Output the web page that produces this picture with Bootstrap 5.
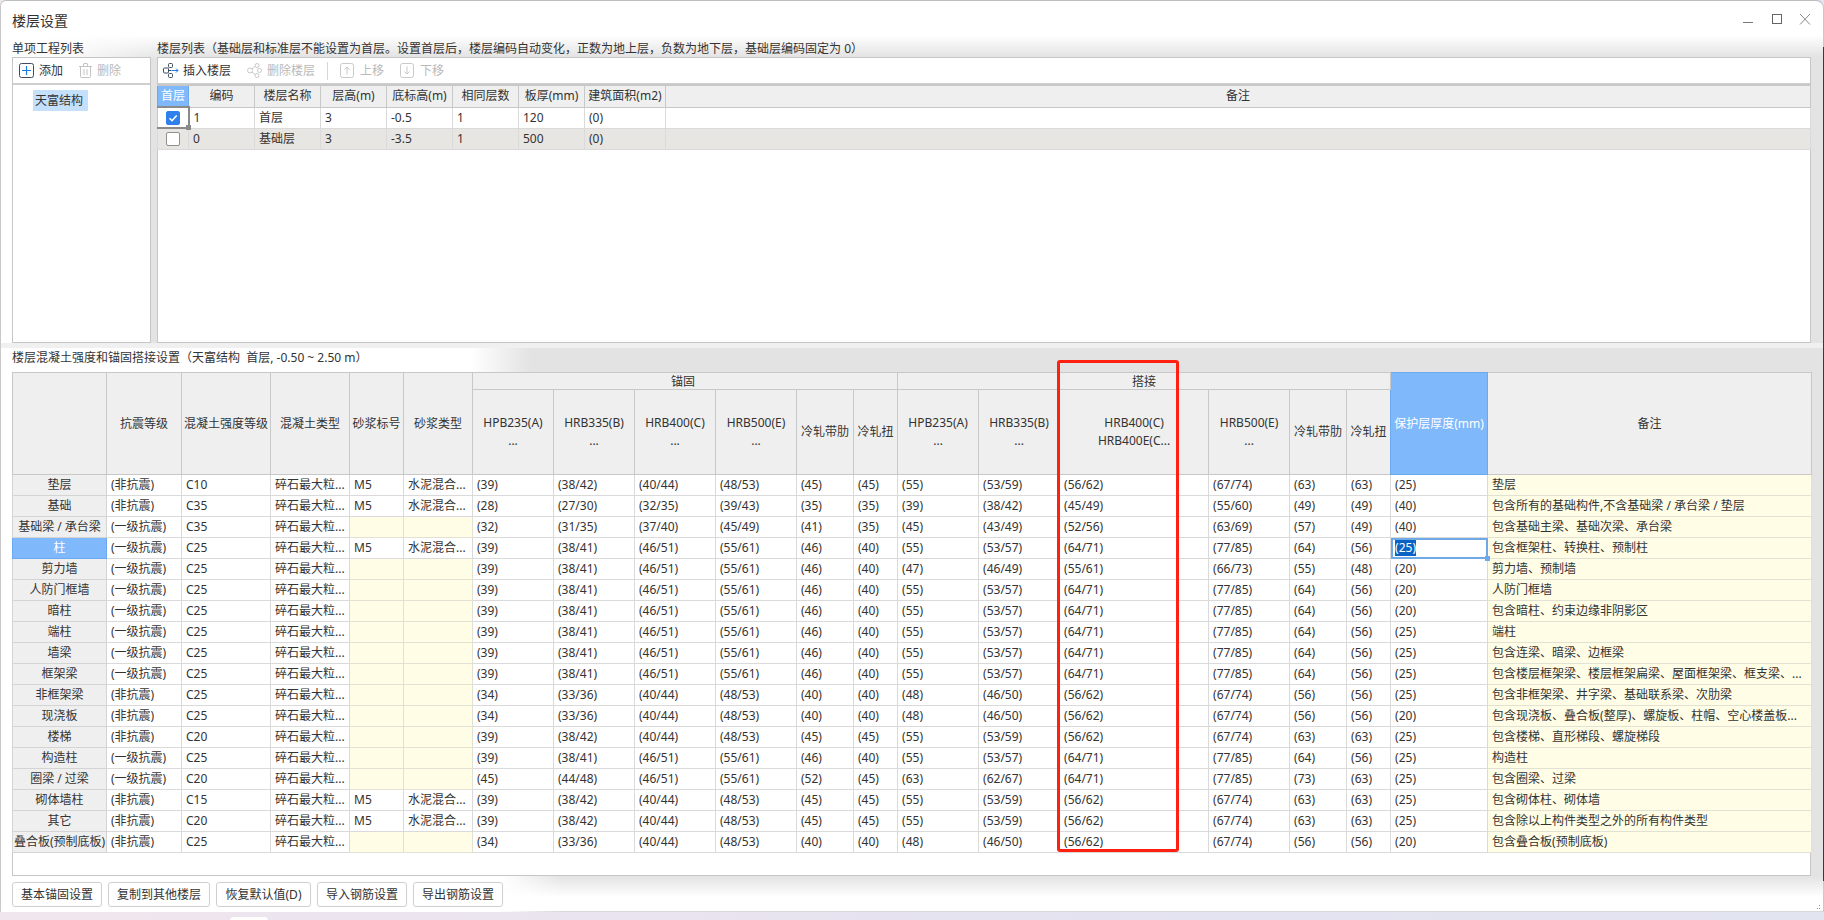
<!DOCTYPE html>
<html lang="zh-CN">
<head>
<meta charset="utf-8">
<title>楼层设置</title>
<link href="https://cdn.jsdelivr.net/npm/bootstrap@5.3.0/dist/css/bootstrap.min.css" rel="stylesheet">
<style>
html,body{height:920px;overflow:hidden;margin:0}
body{background:linear-gradient(90deg,#f0e6ee,#e4e2f0 60%,#e2e4f0);font:12px/1.5 "Noto Sans","Noto Sans CJK SC",sans-serif;color:#333}
.win{width:1824px;height:912px;position:relative;border-top:1px solid #bdbdbd;border-right:1px solid #c9c9c9;border-left:1px solid #c9c9c9;border-bottom:1px solid #d8d8d8;border-top-left-radius:6px;border-top-right-radius:8px;background:
 linear-gradient(90deg,#fff 0,#fff 11px,rgba(255,255,255,0) 11px) 0 0/100% 100% no-repeat,
 linear-gradient(90deg,#fff 0,rgba(255,255,255,.85) 60px,rgba(255,255,255,0) 170px) 0 0/100% 57px no-repeat,
 linear-gradient(180deg,#fff 0,#fff 34px,#e3e3e3 56px,#e3e3e3 875px,#fff 896px,#fff 912px)}
.ttl{height:39px;padding-left:11px;font-size:14px;color:#333}
.wbtn{width:28.5px;height:14px;color:#777}
.wbtn:last-child{width:12px}
.wbtn svg{display:block}
.ctrls{padding-right:12px}
.toprow{height:303px;padding-left:11px;padding-right:12px;column-gap:6px}
.lcol{width:140px}
.rcol{width:1654px}
.lbl{height:17px;line-height:17px;color:#333;white-space:pre}
.panel{background:#fff;border:1px solid #c6c6c6;height:286px}
.tools{height:27px;padding-left:5px;border-bottom:2px solid #cfcfcf}
.lcol .tools{padding-left:6px}
.tool{column-gap:5px;color:#333;white-space:nowrap}
.tool.tight{column-gap:4px}
.tool.wide{column-gap:6px}
.tool.off{color:#b9b9b9}
.tool svg{display:block;flex:none}
.tree{padding:5px 0 0 20px}
.pick{display:inline-block;background:#c5e0fb;padding:0 2px;height:21px;line-height:21px;width:55px;color:#333}
.sep{width:1px;height:18px;background:#d6d6d6;margin:0 12px}
.lbl2{height:29px;line-height:29px;padding-left:11px;color:#333;white-space:pre;background:linear-gradient(180deg,#f0f0f0 0,#f0f0f0 5px,rgba(240,240,240,0) 5px),linear-gradient(90deg,#fff 470px,rgba(255,255,255,0) 530px)}
.gridbox{margin-left:11px;width:1799px;height:504px;background:#fff;border:1px solid #c6c6c6;position:relative}
table.sheet{table-layout:fixed;border-collapse:collapse;margin:-1px 0 0 -1px;color:#333;font-size:12px;line-height:20px}
table.sheet>:not(caption)>*>*{padding:0 4px;height:21px;border:1px solid #dadada;background:#fff;box-shadow:none;color:#333;white-space:nowrap;overflow:hidden;vertical-align:middle}
table.sheet>thead>tr>th{background:#efefef;border-color:#c8c8c8;font-weight:400;text-align:center;padding:0 1px}
table.sheet>tbody>tr>th{background:#efefef;border-color:#d4d4d4;font-weight:400;text-align:center;padding:0}
table.sheet>thead>tr>th.hot,table.sheet>tbody>tr>th.hot{background:#7fb8fb;color:#fff;border-color:#6aa9ee}
table.sheet>thead>tr>th.anchor{padding-right:5px}
table.sheet>tbody>tr>td.soft{background:#fffde6;border-color:#e2e2d4}
table.sheet>thead>tr>th.two{line-height:18px}
table.sheet>tbody>tr>td.grey{background:#e7e6e3}
#upper{width:1653px}
#upper col:nth-child(1){width:31px}
#upper col:nth-child(2),#upper col:nth-child(3),#upper col:nth-child(4),#upper col:nth-child(5),#upper col:nth-child(6),#upper col:nth-child(7){width:66px}
#upper col:nth-child(8){width:81px}
#upper col:nth-child(9){width:1145px}
#upper>thead>tr>th{height:21px;border-top:2px solid #c8c8c8}
#lower{width:1799px}
#lower col:nth-child(1){width:94px}
#lower col:nth-child(2){width:75px}
#lower col:nth-child(3){width:89px}
#lower col:nth-child(4){width:79px}
#lower col:nth-child(5){width:54px}
#lower col:nth-child(6){width:69px}
#lower col:nth-child(7),#lower col:nth-child(8),#lower col:nth-child(9),#lower col:nth-child(10),#lower col:nth-child(13),#lower col:nth-child(14),#lower col:nth-child(16){width:81px}
#lower col:nth-child(11),#lower col:nth-child(17){width:57px}
#lower col:nth-child(12),#lower col:nth-child(18){width:44px}
#lower col:nth-child(15){width:149px}
#lower col:nth-child(19){width:97px}
#lower col:nth-child(20){width:324px}
#lower>thead>tr:first-child>th{height:17px;line-height:15px}
#lower>thead>tr:last-child>th{height:85px}
.boldw{font-weight:700}
.chk{display:block;width:14px;height:14px;border-radius:2px;border:1px solid #8f8f8f;background:#fff;margin:0 auto}
.chk.on{background:#2f80ed;border-color:#2f80ed}
.chk svg{display:block}
table.sheet>tbody>tr>td.cur{position:relative;overflow:visible;border:2px solid #8a8a8a;border-left:0;padding:0}
table.sheet>tbody>tr>td.edit{position:relative;overflow:visible;outline:2px solid #6fa9e8;outline-offset:-2px;padding-left:4px}
.sel{background:#0a63c4;color:#fff}
.knob{position:absolute;right:-3px;bottom:-3px;width:5px;height:5px}
.knob.a{background:#8a8a8a}
.knob.b{background:#6fa9e8}
.footbar{height:36px;padding:6px 0 0 11px;column-gap:6px;background:linear-gradient(90deg,#fff 500px,rgba(255,255,255,0) 560px)}
.gbtn{height:25px;padding:0;background:#fff;border:1px solid #cfcfcf;border-radius:3px;color:#333;font-size:12px;line-height:1;--bs-btn-hover-bg:#fff}
.w90{width:90px}.w102{width:102px}.w95{width:95px}
.redbox{position:absolute;left:1056px;top:359px;width:122px;height:492px;border:3px solid #ff2012;border-radius:3px;pointer-events:none}
.edge{position:absolute;right:-1px;top:46px;width:1px;height:834px;background:#3a3a3a}
.grip{position:absolute;right:2px;bottom:1px;display:block}
.taskbit{position:absolute;left:230px;top:917px;width:38px;height:10px;background:#fff;border-radius:4px 4px 0 0}
</style>
</head>
<body>
<div class="win">
  <div class="ttl d-flex align-items-center justify-content-between">
    <span>楼层设置</span>
    <div class="ctrls d-flex align-items-center">
      <span class="wbtn"><svg width="12" height="14" viewBox="0 0 12 14"><path d="M1 8.500h10" stroke="#777" stroke-width="1"/></svg></span>
      <span class="wbtn"><svg width="12" height="14" viewBox="0 0 12 14"><rect x="1.500" y="0.500" width="9" height="9" fill="none" stroke="#666" stroke-width="1"/></svg></span>
      <span class="wbtn"><svg width="12" height="14" viewBox="0 0 12 14"><path d="M1 0l10 10.500M11 0L1 10.500" stroke="#888" stroke-width="1" fill="none"/></svg></span>
    </div>
  </div>
  <div class="toprow d-flex">
    <div class="lcol">
      <div class="lbl">单项工程列表</div>
      <div class="panel">
        <div class="tools d-flex align-items-center gap-3">
          <span class="tool d-flex align-items-center">
            <svg width="15" height="15" viewBox="0 0 15 15"><rect x=".5" y=".5" width="14" height="14" rx="2" fill="none" stroke="#3d4a60"/><path d="M7.500 3v9M3 7.500h9" stroke="#1f7ae0" stroke-width="1.200"/></svg>添加</span>
          <span class="tool off d-flex align-items-center">
            <svg width="13" height="15" viewBox="0 0 13 15"><path d="M1.500 3.500v10a1 1 0 0 0 1 1h8a1 1 0 0 0 1-1v-10M0 3.500h13M4.500 3.500V1a.5.5 0 0 1 .5-.5h3a.5.5 0 0 1 .5.5v2.500M5 6v6M8 6v6" fill="none" stroke="#c4c4c4"/></svg>删除</span>
        </div>
        <div class="tree"><span class="pick">天富结构</span></div>
      </div>
    </div>
    <div class="rcol">
      <div class="lbl">楼层列表（基础层和标准层不能设置为首层。设置首层后，楼层编码自动变化，正数为地上层，负数为地下层，基础层编码固定为 0）</div>
      <div class="panel">
        <div class="tools d-flex align-items-center">
          <span class="tool tight d-flex align-items-center">
            <svg width="16" height="15" viewBox="0 0 16 15"><g fill="none" stroke="#3d4a60"><rect x=".5" y="5" width="5" height="5" rx="1"/><rect x="5.500" y=".5" width="4" height="4" rx="1"/><rect x="5.500" y="10.500" width="4" height="4" rx="1"/></g><path d="M5.500 7.500h3" stroke="#3d4a60"/><path d="M9 7.500h6M13 5.500l2 2-2 2" fill="none" stroke="#1f7ae0"/></svg>插入楼层</span>
          <span class="tool off d-flex align-items-center ms-3">
            <svg width="15" height="15" viewBox="0 0 15 15"><g fill="none" stroke="#c9c9c9"><circle cx="3" cy="7.500" r="2.500"/><circle cx="10" cy="2.500" r="2"/><circle cx="10" cy="12.500" r="2"/><circle cx="12.500" cy="7.500" r="2"/><path d="M5 6l3-2.500M5 9l3 2.500"/></g></svg>删除楼层</span>
          <span class="sep"></span>
          <span class="tool wide off d-flex align-items-center">
            <svg width="14" height="15" viewBox="0 0 14 15"><rect x=".5" y=".5" width="13" height="14" rx="2" fill="none" stroke="#c9c9c9"/><path d="M7 11.500V4M4.500 6.500 7 4l2.500 2.500" fill="none" stroke="#c9c9c9"/></svg>上移</span>
          <span class="tool wide off d-flex align-items-center ms-3">
            <svg width="14" height="15" viewBox="0 0 14 15"><rect x=".5" y=".5" width="13" height="14" rx="2" fill="none" stroke="#c9c9c9"/><path d="M7 3.500V11M4.500 8.500 7 11l2.500-2.500" fill="none" stroke="#c9c9c9"/></svg>下移</span>
        </div>
        <table id="upper" class="table table-bordered sheet mb-0">
          <colgroup><col><col><col><col><col><col><col><col><col></colgroup>
          <thead><tr><th class="hot">首层</th><th>编码</th><th>楼层名称</th><th>层高(m)</th><th>底标高(m)</th><th>相同层数</th><th>板厚(mm)</th><th>建筑面积(m2)</th><th>备注</th></tr></thead>
          <tbody>
            <tr><td class="cur"><span class="chk on"><svg width="12" height="12" viewBox="0 0 12 12"><path d="M2.500 6.200 5 8.700l4.700-5.200" fill="none" stroke="#fff" stroke-width="1.600"/></svg></span><i class="knob a"></i></td><td>1</td><td>首层</td><td>3</td><td>-0.5</td><td>1</td><td>120</td><td>(0)</td><td></td></tr>
            <tr><td class="grey"><span class="chk"></span></td><td class="grey">0</td><td class="grey">基础层</td><td class="grey">3</td><td class="grey">-3.5</td><td class="grey">1</td><td class="grey">500</td><td class="grey">(0)</td><td class="grey"></td></tr>
          </tbody>
        </table>
      </div>
    </div>
  </div>
  <div class="lbl2">楼层混凝土强度和锚固搭接设置（天富结构  首层, -0.50 ~ 2.50 m）</div>
  <div class="gridbox">
    <table id="lower" class="table table-bordered sheet mb-0">
      <colgroup><col><col><col><col><col><col><col><col><col><col><col><col><col><col><col><col><col><col><col><col></colgroup>
      <thead>
        <tr><th rowspan="2"></th><th rowspan="2">抗震等级</th><th rowspan="2">混凝土强度等级</th><th rowspan="2">混凝土类型</th><th rowspan="2">砂浆标号</th><th rowspan="2">砂浆类型</th><th colspan="6" class="anchor">锚固</th><th colspan="6">搭接</th><th rowspan="2" class="hot boldw">保护层厚度(mm)</th><th rowspan="2">备注</th></tr>
        <tr><th class="two">HPB235(A)<br>...</th><th class="two">HRB335(B)<br>...</th><th class="two">HRB400(C)<br>...</th><th class="two">HRB500(E)<br>...</th><th>冷轧带肋</th><th>冷轧扭</th><th class="two">HPB235(A)<br>...</th><th class="two">HRB335(B)<br>...</th><th class="two">HRB400(C)<br>HRB400E(C...</th><th class="two">HRB500(E)<br>...</th><th>冷轧带肋</th><th>冷轧扭</th></tr>
      </thead>
      <tbody>
        <tr><th>垫层</th><td>(非抗震)</td><td>C10</td><td>碎石最大粒...</td><td>M5</td><td>水泥混合...</td><td>(39)</td><td>(38/42)</td><td>(40/44)</td><td>(48/53)</td><td>(45)</td><td>(45)</td><td>(55)</td><td>(53/59)</td><td>(56/62)</td><td>(67/74)</td><td>(63)</td><td>(63)</td><td>(25)</td><td class="soft">垫层</td></tr>
        <tr><th>基础</th><td>(非抗震)</td><td>C35</td><td>碎石最大粒...</td><td>M5</td><td>水泥混合...</td><td>(28)</td><td>(27/30)</td><td>(32/35)</td><td>(39/43)</td><td>(35)</td><td>(35)</td><td>(39)</td><td>(38/42)</td><td>(45/49)</td><td>(55/60)</td><td>(49)</td><td>(49)</td><td>(40)</td><td class="soft">包含所有的基础构件,不含基础梁 / 承台梁 / 垫层</td></tr>
        <tr><th>基础梁 / 承台梁</th><td>(一级抗震)</td><td>C35</td><td>碎石最大粒...</td><td class="soft"></td><td class="soft"></td><td>(32)</td><td>(31/35)</td><td>(37/40)</td><td>(45/49)</td><td>(41)</td><td>(35)</td><td>(45)</td><td>(43/49)</td><td>(52/56)</td><td>(63/69)</td><td>(57)</td><td>(49)</td><td>(40)</td><td class="soft">包含基础主梁、基础次梁、承台梁</td></tr>
        <tr><th class="hot boldw">柱</th><td>(一级抗震)</td><td>C25</td><td>碎石最大粒...</td><td>M5</td><td>水泥混合...</td><td>(39)</td><td>(38/41)</td><td>(46/51)</td><td>(55/61)</td><td>(46)</td><td>(40)</td><td>(55)</td><td>(53/57)</td><td>(64/71)</td><td>(77/85)</td><td>(64)</td><td>(56)</td><td class="edit"><span class="sel">(25)</span><i class="knob b"></i></td><td class="soft">包含框架柱、转换柱、预制柱</td></tr>
        <tr><th>剪力墙</th><td>(一级抗震)</td><td>C25</td><td>碎石最大粒...</td><td class="soft"></td><td class="soft"></td><td>(39)</td><td>(38/41)</td><td>(46/51)</td><td>(55/61)</td><td>(46)</td><td>(40)</td><td>(47)</td><td>(46/49)</td><td>(55/61)</td><td>(66/73)</td><td>(55)</td><td>(48)</td><td>(20)</td><td class="soft">剪力墙、预制墙</td></tr>
        <tr><th>人防门框墙</th><td>(一级抗震)</td><td>C25</td><td>碎石最大粒...</td><td class="soft"></td><td class="soft"></td><td>(39)</td><td>(38/41)</td><td>(46/51)</td><td>(55/61)</td><td>(46)</td><td>(40)</td><td>(55)</td><td>(53/57)</td><td>(64/71)</td><td>(77/85)</td><td>(64)</td><td>(56)</td><td>(20)</td><td class="soft">人防门框墙</td></tr>
        <tr><th>暗柱</th><td>(一级抗震)</td><td>C25</td><td>碎石最大粒...</td><td class="soft"></td><td class="soft"></td><td>(39)</td><td>(38/41)</td><td>(46/51)</td><td>(55/61)</td><td>(46)</td><td>(40)</td><td>(55)</td><td>(53/57)</td><td>(64/71)</td><td>(77/85)</td><td>(64)</td><td>(56)</td><td>(20)</td><td class="soft">包含暗柱、约束边缘非阴影区</td></tr>
        <tr><th>端柱</th><td>(一级抗震)</td><td>C25</td><td>碎石最大粒...</td><td class="soft"></td><td class="soft"></td><td>(39)</td><td>(38/41)</td><td>(46/51)</td><td>(55/61)</td><td>(46)</td><td>(40)</td><td>(55)</td><td>(53/57)</td><td>(64/71)</td><td>(77/85)</td><td>(64)</td><td>(56)</td><td>(25)</td><td class="soft">端柱</td></tr>
        <tr><th>墙梁</th><td>(一级抗震)</td><td>C25</td><td>碎石最大粒...</td><td class="soft"></td><td class="soft"></td><td>(39)</td><td>(38/41)</td><td>(46/51)</td><td>(55/61)</td><td>(46)</td><td>(40)</td><td>(55)</td><td>(53/57)</td><td>(64/71)</td><td>(77/85)</td><td>(64)</td><td>(56)</td><td>(25)</td><td class="soft">包含连梁、暗梁、边框梁</td></tr>
        <tr><th>框架梁</th><td>(一级抗震)</td><td>C25</td><td>碎石最大粒...</td><td class="soft"></td><td class="soft"></td><td>(39)</td><td>(38/41)</td><td>(46/51)</td><td>(55/61)</td><td>(46)</td><td>(40)</td><td>(55)</td><td>(53/57)</td><td>(64/71)</td><td>(77/85)</td><td>(64)</td><td>(56)</td><td>(25)</td><td class="soft">包含楼层框架梁、楼层框架扁梁、屋面框架梁、框支梁、...</td></tr>
        <tr><th>非框架梁</th><td>(非抗震)</td><td>C25</td><td>碎石最大粒...</td><td class="soft"></td><td class="soft"></td><td>(34)</td><td>(33/36)</td><td>(40/44)</td><td>(48/53)</td><td>(40)</td><td>(40)</td><td>(48)</td><td>(46/50)</td><td>(56/62)</td><td>(67/74)</td><td>(56)</td><td>(56)</td><td>(25)</td><td class="soft">包含非框架梁、井字梁、基础联系梁、次肋梁</td></tr>
        <tr><th>现浇板</th><td>(非抗震)</td><td>C25</td><td>碎石最大粒...</td><td class="soft"></td><td class="soft"></td><td>(34)</td><td>(33/36)</td><td>(40/44)</td><td>(48/53)</td><td>(40)</td><td>(40)</td><td>(48)</td><td>(46/50)</td><td>(56/62)</td><td>(67/74)</td><td>(56)</td><td>(56)</td><td>(20)</td><td class="soft">包含现浇板、叠合板(整厚)、螺旋板、柱帽、空心楼盖板...</td></tr>
        <tr><th>楼梯</th><td>(非抗震)</td><td>C20</td><td>碎石最大粒...</td><td class="soft"></td><td class="soft"></td><td>(39)</td><td>(38/42)</td><td>(40/44)</td><td>(48/53)</td><td>(45)</td><td>(45)</td><td>(55)</td><td>(53/59)</td><td>(56/62)</td><td>(67/74)</td><td>(63)</td><td>(63)</td><td>(25)</td><td class="soft">包含楼梯、直形梯段、螺旋梯段</td></tr>
        <tr><th>构造柱</th><td>(一级抗震)</td><td>C25</td><td>碎石最大粒...</td><td class="soft"></td><td class="soft"></td><td>(39)</td><td>(38/41)</td><td>(46/51)</td><td>(55/61)</td><td>(46)</td><td>(40)</td><td>(55)</td><td>(53/57)</td><td>(64/71)</td><td>(77/85)</td><td>(64)</td><td>(56)</td><td>(25)</td><td class="soft">构造柱</td></tr>
        <tr><th>圈梁 / 过梁</th><td>(一级抗震)</td><td>C20</td><td>碎石最大粒...</td><td class="soft"></td><td class="soft"></td><td>(45)</td><td>(44/48)</td><td>(46/51)</td><td>(55/61)</td><td>(52)</td><td>(45)</td><td>(63)</td><td>(62/67)</td><td>(64/71)</td><td>(77/85)</td><td>(73)</td><td>(63)</td><td>(25)</td><td class="soft">包含圈梁、过梁</td></tr>
        <tr><th>砌体墙柱</th><td>(非抗震)</td><td>C15</td><td>碎石最大粒...</td><td>M5</td><td>水泥混合...</td><td>(39)</td><td>(38/42)</td><td>(40/44)</td><td>(48/53)</td><td>(45)</td><td>(45)</td><td>(55)</td><td>(53/59)</td><td>(56/62)</td><td>(67/74)</td><td>(63)</td><td>(63)</td><td>(25)</td><td class="soft">包含砌体柱、砌体墙</td></tr>
        <tr><th>其它</th><td>(非抗震)</td><td>C20</td><td>碎石最大粒...</td><td>M5</td><td>水泥混合...</td><td>(39)</td><td>(38/42)</td><td>(40/44)</td><td>(48/53)</td><td>(45)</td><td>(45)</td><td>(55)</td><td>(53/59)</td><td>(56/62)</td><td>(67/74)</td><td>(63)</td><td>(63)</td><td>(25)</td><td class="soft">包含除以上构件类型之外的所有构件类型</td></tr>
        <tr><th>叠合板(预制底板)</th><td>(非抗震)</td><td>C25</td><td>碎石最大粒...</td><td class="soft"></td><td class="soft"></td><td>(34)</td><td>(33/36)</td><td>(40/44)</td><td>(48/53)</td><td>(40)</td><td>(40)</td><td>(48)</td><td>(46/50)</td><td>(56/62)</td><td>(67/74)</td><td>(56)</td><td>(56)</td><td>(20)</td><td class="soft">包含叠合板(预制底板)</td></tr>
      </tbody>
    </table>
  </div>
  <div class="footbar d-flex align-items-start">
    <button type="button" class="btn gbtn w90">基本锚固设置</button>
    <button type="button" class="btn gbtn w102">复制到其他楼层</button>
    <button type="button" class="btn gbtn w95">恢复默认值(D)</button>
    <button type="button" class="btn gbtn w90">导入钢筋设置</button>
    <button type="button" class="btn gbtn w90">导出钢筋设置</button>
  </div>
  <div class="redbox"></div>
  <div class="edge"></div>
  <svg class="grip" width="5" height="5" viewBox="0 0 5 5"><path d="M3 0h1v1H3zM1 3h1v1H1zM3 3h1v1H3z" fill="#999"/></svg>
</div>
<div class="taskbit"></div>
<script src="https://cdn.jsdelivr.net/npm/bootstrap@5.3.0/dist/js/bootstrap.bundle.min.js"></script>
</body>
</html>
